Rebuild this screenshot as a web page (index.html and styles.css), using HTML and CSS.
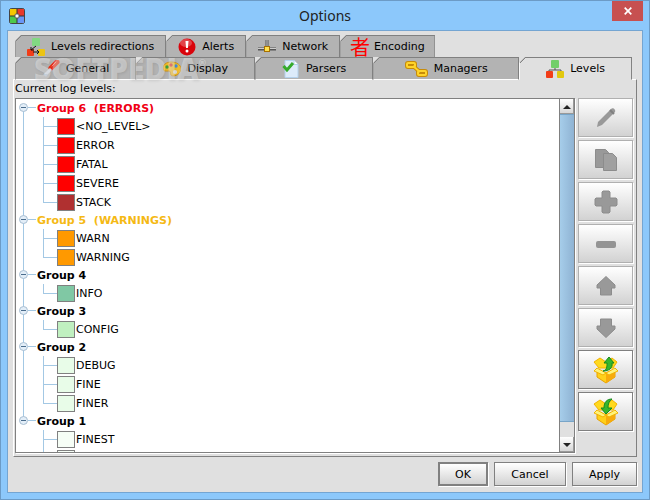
FILE: index.html
```
<!DOCTYPE html>
<html lang="en">
<head>
    <meta charset="UTF-8">
    <meta name="viewport" content="width=device-width, initial-scale=1.0">
    <title>Options</title>
    <link rel="stylesheet" href="styles.css">
</head>
<body>

    <div class="window">
        <div class="title-bar">
            <svg class="app-icon" width="16" height="16" viewBox="0 0 16 16">
                <rect x="0.5" y="0.5" width="15" height="15" rx="2" fill="#333" stroke="#444"/>
                <rect x="1" y="1" width="6.500" height="6.500" fill="#f5c800"/>
                <rect x="8.500" y="1" width="6.500" height="6.500" fill="#e8382a"/>
                <rect x="1" y="8.500" width="6.500" height="6.500" fill="#4dc94a"/>
                <rect x="8.500" y="8.500" width="6.500" height="6.500" fill="#6a96f5"/>
                <rect x="6" y="6" width="4" height="4" rx="1" fill="#fff" stroke="#555"/>
            </svg>
            <h1>Options</h1>
            <button class="close-button" aria-label="Close">
                <svg width="8" height="8" viewBox="0 0 8 8"><path d="M.7.7 7.300 7.300M7.300.7.7 7.300" stroke="#fff" stroke-width="1.700"/></svg>
            </button>
        </div>

        <div class="client">
            <div class="tabs" role="tablist">
                <div class="tab-row">
                    <button class="tab" role="tab">
                        <svg width="18" height="18" viewBox="0 0 18 18">
                            <rect x="5" y="0" width="8" height="8" rx="1" fill="#82d982"/>
                            <rect x="0" y="11" width="7" height="7" rx="1" fill="#f23d18"/>
                            <rect x="11" y="11" width="7" height="7" rx="1" fill="#ecc414"/>
                            <path d="M9 8 4 12M4 9v3h3M6 14h6M10 12l2 2-2 2" fill="none" stroke="#111"/>
                        </svg>
                        Levels redirections
                    </button>
                    <button class="tab" role="tab">
                        <svg width="18" height="18" viewBox="0 0 18 18">
                            <circle cx="9" cy="9" r="8.500" fill="#d9040c"/>
                            <ellipse cx="8" cy="5" rx="6" ry="4" fill="#fff" opacity=".25"/>
                            <path d="M7.500 3h3l-.6 7H8z" fill="#fff"/>
                            <circle cx="9" cy="13" r="1.500" fill="#fff"/>
                        </svg>
                        Alerts
                    </button>
                    <button class="tab" role="tab">
                        <svg width="18" height="18" viewBox="0 0 18 18">
                            <path d="M9 2v9M0 11h18" stroke="#555" stroke-width="3"/>
                            <path d="M9 2v9M0 10.500h18" stroke="#ccc"/>
                            <rect x="6.500" y="8.500" width="5" height="5" fill="#ffe14d" stroke="#a87000"/>
                        </svg>
                        Network
                    </button>
                    <button class="tab encoding" role="tab"><span class="kanji">者</span>Encoding</button>
                </div>
                <div class="tab-row fill">
                    <button class="tab" role="tab">
                        <svg width="18" height="18" viewBox="0 0 18 18">
                            <path d="m9 8 6-6" stroke="#e62e12" stroke-width="5" stroke-linecap="round"/>
                            <path d="m10 6 4-4" stroke="#ff8a70" stroke-linecap="round"/>
                            <path d="M9 9 3 15" stroke="#d5dde8" stroke-width="3"/>
                            <path d="m1 14 3 3 2-3" fill="#b8c4d4"/>
                        </svg>
                        General
                    </button>
                    <button class="tab" role="tab">
                        <svg width="18" height="18" viewBox="0 0 18 18">
                            <path d="M8 2C3 2 0 5 0 8c0 4 4 3 6 3 2 0 1 2 2 4s9 1 10-6c0-4-4-7-10-7z" fill="#f0bd2c" stroke="#cf9418"/>
                            <circle cx="4" cy="7" r="1.700" fill="#3ea33c"/><circle cx="8" cy="5" r="1.700" fill="#d93025"/>
                            <circle cx="13" cy="6" r="1.700" fill="#3e8fdf"/><circle cx="12" cy="12" r="2" fill="#e0e0e0"/>
                        </svg>
                        Display
                    </button>
                    <button class="tab" role="tab">
                        <svg width="18" height="18" viewBox="0 0 18 18">
                            <path d="M3 .5h9l4 4v13H3z" fill="#dcebfa" stroke="#b4d1ec"/>
                            <path d="M12 .5v4h4" fill="#fff" stroke="#b4d1ec"/>
                            <path d="m1.500 6 3.500 4 6-7" fill="none" stroke="#35ab2c" stroke-width="3"/>
                        </svg>
                        Parsers
                    </button>
                    <button class="tab wide" role="tab">
                        <svg width="23" height="18" viewBox="0 0 23 18">
                            <g fill="none" stroke="#c78b08" stroke-width="4"><rect x="2" y="3" width="8" height="4" rx="1"/><rect x="13" y="11" width="8" height="4" rx="1"/><path d="m8 6 7 6"/></g>
                            <g fill="none" stroke="#ffd42a" stroke-width="2"><rect x="2" y="3" width="8" height="4" rx="1"/><rect x="13" y="11" width="8" height="4" rx="1"/><path d="m8 6 7 6"/></g>
                        </svg>
                        Managers
                    </button>
                    <button class="tab active" role="tab" aria-selected="true">
                        <svg width="18" height="18" viewBox="0 0 18 18">
                            <path d="M9 8v2M3 12v-2h12v2" fill="none" stroke="#555"/>
                            <rect x="5" y="0" width="8" height="8" rx="1" fill="#72cf6a"/>
                            <rect x="0" y="11" width="7" height="7" rx="1" fill="#f23d18"/>
                            <rect x="11" y="11" width="7" height="7" rx="1" fill="#e2c80e"/>
                        </svg>
                        Levels
                    </button>
                </div>
                <div class="watermark">SOFTPEDIA<sup>®</sup></div>
            </div>

            <div class="panel">
                <p class="label" id="levels-label">Current log levels:</p>
                <div class="panel-body">
                    <div class="tree-box">
                        <ul class="tree" aria-labelledby="levels-label">
                            <li class="group errors"><button class="toggle" aria-label="Collapse"></button><span class="group-name">Group 6&nbsp; (ERRORS)</span>
                                <ul>
                                    <li><span class="swatch red"></span>&lt;NO_LEVEL&gt;</li>
                                    <li><span class="swatch red"></span>ERROR</li>
                                    <li><span class="swatch red"></span>FATAL</li>
                                    <li><span class="swatch red"></span>SEVERE</li>
                                    <li><span class="swatch brown"></span>STACK</li>
                                </ul>
                            </li>
                            <li class="group warnings"><button class="toggle" aria-label="Collapse"></button><span class="group-name">Group 5&nbsp; (WARNINGS)</span>
                                <ul>
                                    <li><span class="swatch orange"></span>WARN</li>
                                    <li><span class="swatch orange"></span>WARNING</li>
                                </ul>
                            </li>
                            <li class="group"><button class="toggle" aria-label="Collapse"></button><span class="group-name">Group 4</span>
                                <ul>
                                    <li><span class="swatch teal"></span>INFO</li>
                                </ul>
                            </li>
                            <li class="group"><button class="toggle" aria-label="Collapse"></button><span class="group-name">Group 3</span>
                                <ul>
                                    <li><span class="swatch green"></span>CONFIG</li>
                                </ul>
                            </li>
                            <li class="group"><button class="toggle" aria-label="Collapse"></button><span class="group-name">Group 2</span>
                                <ul>
                                    <li><span class="swatch mint"></span>DEBUG</li>
                                    <li><span class="swatch mint"></span>FINE</li>
                                    <li><span class="swatch mint"></span>FINER</li>
                                </ul>
                            </li>
                            <li class="group"><button class="toggle" aria-label="Collapse"></button><span class="group-name">Group 1</span>
                                <ul>
                                    <li><span class="swatch pale"></span>FINEST</li>
                                    <li><span class="swatch pale"></span></li>
                                </ul>
                            </li>
                        </ul>
                        <div class="scrollbar">
                            <button class="scroll-button" aria-label="Scroll up"><svg width="8" height="4" viewBox="0 0 8 4"><path d="M0 4 4 0l4 4z" fill="#222"/></svg></button>
                            <div class="thumb"></div>
                            <div class="track"></div>
                            <button class="scroll-button" aria-label="Scroll down"><svg width="8" height="4" viewBox="0 0 8 4"><path d="m0 0 4 4 4-4z" fill="#222"/></svg></button>
                        </div>
                    </div>

                    <div class="tools">
                        <button disabled aria-label="Edit"><svg width="24" height="24" viewBox="0 0 24 24"><path d="m3 21 1-5L17 3c2-2 5 1 4 3L8 19z" fill="#999"/><path d="m16 4 4 4" stroke="#808080" stroke-width="2"/></svg></button>
                        <button disabled aria-label="Copy"><svg width="24" height="24" viewBox="0 0 24 24"><path d="M1.500 1.500h10l3 3v15h-13z" fill="#999" stroke="#8c8c8c"/><path d="M9.500 5.500h9l4 4v13h-13z" fill="#a0a0a0" stroke="#8c8c8c"/></svg></button>
                        <button disabled aria-label="Add"><svg width="24" height="24" viewBox="0 0 24 24"><path d="M9 1h6l1 1v6h6l1 1v6l-1 1h-6v6l-1 1H9l-1-1v-6H2l-1-1V9l1-1h6V2z" fill="#999" stroke="#8c8c8c"/></svg></button>
                        <button disabled aria-label="Remove"><svg width="24" height="24" viewBox="0 0 24 24"><rect x="2" y="9" width="20" height="7" rx="2" fill="#949494"/></svg></button>
                        <button disabled aria-label="Move up"><svg width="24" height="24" viewBox="0 0 24 24"><path d="M12 2.500 21 11v3h-3.500v7h-11v-7H3v-3z" fill="#999" stroke="#8c8c8c"/></svg></button>
                        <button disabled aria-label="Move down"><svg width="24" height="24" viewBox="0 0 24 24"><path d="M12 21.500 21 13v-3h-3.500V3h-11v7H3v3z" fill="#999" stroke="#8c8c8c"/></svg></button>
                        <button aria-label="Export">
                            <svg width="26" height="28" viewBox="0 0 26 28">
                                <path d="m1 6 6-4 6 4 6-4 5 4-4 6H6z" fill="#ffd91e" stroke="#f2b200"/>
                                <path d="m4 13 9 4 9-4v8l-9 6-9-6z" fill="#ffd01a" stroke="#e8a200"/>
                                <path d="m13 17 9-4v8l-9 6z" fill="#f7ab0c"/>
                                <path d="m13 17 9-5 3 3-9 4zM13 17l-9-5-3 3 9 4z" fill="#fff37a" stroke="#f2b200"/>
                                <path d="M10 15c4-1 4-4 4-8h-3l5-6 5 6h-2c1 5-3 8-9 8z" fill="#36b52e" stroke="#168a1c"/>
                            </svg>
                        </button>
                        <button aria-label="Import">
                            <svg width="26" height="28" viewBox="0 0 26 28">
                                <path d="m1 6 6-4 6 4 6-4 5 4-4 6H6z" fill="#ffd91e" stroke="#f2b200"/>
                                <path d="m4 13 9 4 9-4v8l-9 6-9-6z" fill="#ffd01a" stroke="#e8a200"/>
                                <path d="m13 17 9-4v8l-9 6z" fill="#f7ab0c"/>
                                <path d="m13 17 9-5 3 3-9 4zM13 17l-9-5-3 3 9 4z" fill="#fff37a" stroke="#f2b200"/>
                                <path d="M19 1c-5 0-8 3-8 9H8l5 6 6-6h-4c0-4 1-7 4-9z" fill="#36b52e" stroke="#168a1c"/>
                            </svg>
                        </button>
                    </div>
                </div>
            </div>

            <div class="actions">
                <button class="default">OK</button>
                <button class="cancel">Cancel</button>
                <button class="apply">Apply</button>
            </div>
        </div>
    </div>

    <script>
        document.querySelectorAll('.toggle').forEach(function (button) {
            button.onclick = function () {
                button.parentElement.classList.toggle('closed');
            };
        });
    </script>

</body>
</html>
```
FILE: styles.css
```
* {
    box-sizing: border-box;
}
body {
    margin: 0;
    font-family: Verdana, "DejaVu Sans", sans-serif;
    font-size: 11px;
    color: #000;
}
button {
    font: inherit;
    color: inherit;
    padding: 0;
    display: flex;
    align-items: center;
    justify-content: center;
}
ul {
    list-style: none;
    margin: 0;
    padding: 0;
}
.window {
    height: 100vh;
    display: flex;
    flex-direction: column;
    background-color: #8cc8fb;
    border: 1px solid #6c9bc6;
    padding: 0 6px 6px;
}
.title-bar {
    height: 29px;
    flex-shrink: 0;
    display: grid;
    grid-template-columns: 1fr auto 1fr;
    align-items: center;
}
.app-icon {
    margin-left: 2px;
}
.title-bar h1 {
    margin: 0;
    font-family: "Noto Sans", sans-serif;
    font-size: 14px;
    line-height: 20px;
    font-weight: normal;
    color: #222;
}
.close-button {
    justify-self: end;
    align-self: start;
    width: 31px;
    height: 20px;
    border: none;
    background-color: #c75050;
}
.client {
    flex: 1;
    min-height: 0;
    display: flex;
    flex-direction: column;
    background-color: #e0e0e0;
    border: 1px solid #74a5d2;
    padding: 4px 5px 6px;
}

/* tabs */
.tabs {
    position: relative;
    z-index: 1;
    margin-bottom: -1px;
    padding: 0 5px 0 2px;
}
.tab-row {
    display: flex;
    height: 22px;
}
.fill {
    height: 23px;
}
.tab {
    gap: 6px;
    padding: 0 11px;
    border: 1px solid #808080;
    border-left-color: #999;
    border-bottom: none;
    background: linear-gradient(135deg, #808080 5px, #b3b3b3 5px) border-box;
    clip-path: polygon(0 6px, 6px 0, 100% 0, 100% 100%, 0 100%);
    white-space: nowrap;
}
.tab svg {
    flex-shrink: 0;
}
.encoding {
    gap: 4px;
    padding: 0 9px;
}
.fill .tab {
    flex: 10 1 auto;
    border-bottom: 1px solid #fff;
}
.fill .wide {
    flex-grow: 13;
}
.fill .active {
    background: linear-gradient(135deg, #808080 5px, #e0e0e0 5px) border-box;
    border-left-color: #fff;
    border-bottom-color: #e0e0e0;
}
.kanji {
    font-family: "Noto Sans CJK JP", sans-serif;
    font-size: 20px;
    line-height: 20px;
    color: #f00;
}
.watermark {
    position: absolute;
    left: 21px;
    top: 16px;
    font-family: "Open Sans", sans-serif;
    font-size: 30px;
    font-weight: 800;
    line-height: 36px;
    color: rgba(255, 255, 255, 0.35);
    text-shadow: 1px 1px 3px rgba(0, 0, 0, 0.1);
    pointer-events: none;
}
.watermark sup {
    font-size: 9px;
    line-height: 9px;
    vertical-align: 14px;
}

/* levels panel */
.panel {
    flex: 1;
    min-height: 0;
    display: flex;
    flex-direction: column;
    border: 1px solid #808080;
    border-top-color: #fff;
    border-left-color: #fff;
    padding: 0 3px 3px 1px;
}
.label {
    margin: 0;
    line-height: 18px;
}
.panel-body {
    flex: 1;
    min-height: 0;
    display: flex;
    gap: 3px;
}
.tree-box {
    flex: 1;
    display: flex;
    min-height: 0;
    background-color: #fff;
    border: 1px solid #808080;
    box-shadow: 1px 1px #fff;
    overflow: hidden;
}
.tree {
    flex: 1;
    padding-top: 1px;
}
.group {
    position: relative;
    padding-left: 21px;
}
.group-name {
    display: block;
    font-weight: bold;
    line-height: 17px;
    white-space: nowrap;
}
.errors .group-name {
    color: #f00014;
}
.warnings .group-name {
    color: #f5b914;
}
.group:not(:last-child)::before {
    content: "";
    position: absolute;
    left: 7px;
    top: 7px;
    height: 100%;
    border-left: 1px solid #a3c8e4;
}
.group::after {
    content: "";
    position: absolute;
    left: 12px;
    top: 7px;
    width: 8px;
    border-top: 1px solid #a3c8e4;
}
.toggle {
    position: absolute;
    z-index: 1;
    left: 3px;
    top: 3px;
    width: 9px;
    height: 9px;
    border: 1px solid #a9bfd2;
    border-radius: 50%;
    background-color: #e3eef8;
}
.toggle::before {
    content: "";
    width: 5px;
    height: 1px;
    background-color: #4a6c8c;
}
.group.closed ul {
    display: none;
}
.group li {
    position: relative;
    display: flex;
    align-items: center;
    gap: 1px;
    height: 19px;
    padding-left: 20px;
    white-space: nowrap;
}
.group li::before {
    content: "";
    position: absolute;
    left: 6px;
    top: 0;
    width: 13px;
    height: 9px;
    border-left: 1px solid #a3c8e4;
    border-bottom: 1px solid #a3c8e4;
}
.group li:not(:last-child)::after {
    content: "";
    position: absolute;
    left: 6px;
    top: 0;
    height: 100%;
    border-left: 1px solid #a3c8e4;
}
.swatch {
    width: 18px;
    height: 17px;
    border: 1px solid #808080;
}
.red { background-color: #f00; }
.brown { background-color: #b03030; }
.orange { background-color: #ff9900; }
.teal { background-color: #80c8a4; }
.green { background-color: #c0f0c0; }
.mint { background-color: #e8fce8; }
.pale { background-color: #f6fef6; }

.scrollbar {
    width: 15px;
    display: flex;
    flex-direction: column;
    border-left: 1px solid #808080;
}
.scroll-button {
    height: 15px;
    border: none;
    background: linear-gradient(#fff, #d4d4d4);
    box-shadow: inset -1px -1px #999;
}
.thumb {
    flex: 20;
    border: 1px solid #78a5c8;
    border-width: 1px 0;
    background: linear-gradient(90deg, #a6cdea, #8fb3d3);
}
.track {
    flex: 1;
    background-color: #e0e0e0;
}

/* side buttons */
.tools {
    display: flex;
    flex-direction: column;
    gap: 3px;
}
.tools button,
.actions button {
    border: 1px solid #808080;
    background: linear-gradient(#fff, #d2d2d2);
    box-shadow: 1px 1px #fff;
}
.tools button {
    width: 55px;
    height: 39px;
}
.tools button:disabled {
    border-color: #b0b0b0;
}

.actions {
    display: flex;
    justify-content: flex-end;
    gap: 6px;
    padding-top: 5px;
}
.actions button {
    height: 24px;
    padding: 0 11px;
}
.actions .default {
    width: 50px;
    border-width: 2px;
}
.actions .cancel {
    width: 72px;
}
.actions .apply {
    width: 65px;
}
```
